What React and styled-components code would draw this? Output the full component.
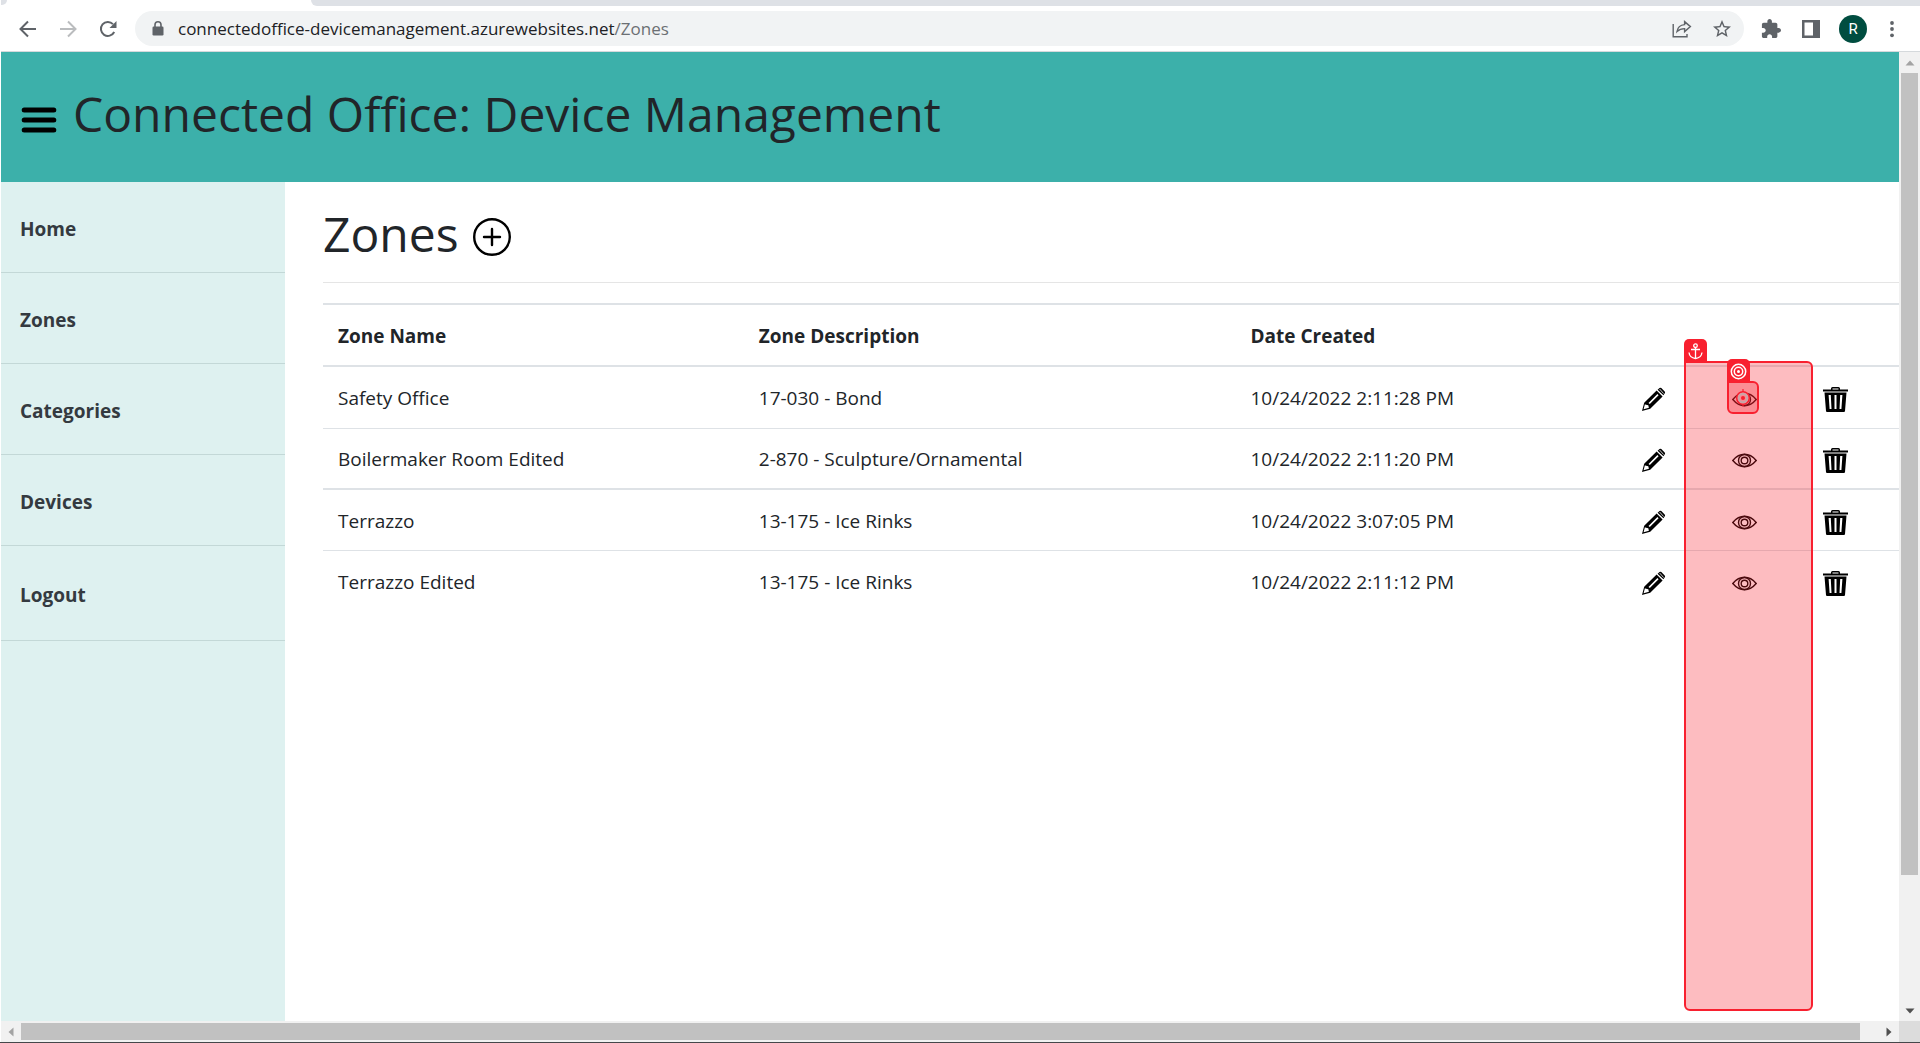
import React from "react";
import styled, { createGlobalStyle } from "styled-components";

const Global = createGlobalStyle`
  *, *::before, *::after { box-sizing: border-box; }
  html, body { margin: 0; padding: 0; }
  body {
    background: #fff;
    color: #212529;
    font-family: "Open Sans", "Noto Sans", sans-serif;
    font-size: 19px;
    line-height: 30px;
    overflow: hidden;
  }
  button { font: inherit; color: inherit; background: none; border: 0; padding: 0; margin: 0; cursor: pointer; }
  a { color: inherit; text-decoration: none; }
  svg { display: block; }
`;

const Window = styled.div`
  display: flex;
  flex-direction: column;
  height: 100vh;
  padding-left: 1px;
  border-bottom: 1px solid #45474a;
  position: relative;
`;

/* Browser chrome */
const TabStrip = styled.div`
  flex: none;
  height: 6px;
  display: flex;
  background: #dee1e6;
`;
const ActiveTab = styled.div`
  width: 308px;
  background: #fff;
  border-top-left-radius: 6px;
`;
const StripRest = styled.div`
  flex: 1;
  background: #dee1e6;
  border-bottom-left-radius: 8px;
`;
const TabCorner = styled.div`
  width: 310px;
  background: #fff;
`;
const TabCurve = styled.div`
  width: 6px;
  height: 5px;
  background: #dee1e6;
  border-bottom-right-radius: 6px;
`;
const Toolbar = styled.div`
  flex: none;
  display: flex;
  align-items: center;
  height: 46px;
  padding: 0 19px 0 15px;
  border-bottom: 1px solid #d5d9dc;
`;
const NavButtons = styled.div`
  display: flex;
  gap: 16px;
`;
const IconButton = styled.button`
  width: ${(p) => (p.$narrow ? "18px" : "24px")};
  height: 24px;
  display: grid;
  place-items: center;
  color: ${(p) => (p.$dim ? "#babcbe" : "#5f6368")};
`;
const AddressBar = styled.div`
  flex: 1;
  display: flex;
  align-items: center;
  gap: 14px;
  height: 35px;
  margin: 0 15px;
  padding: 0 10px 0 17px;
  border-radius: 18px;
  background: #f1f3f4;
`;
const Url = styled.a`
  flex: 1;
  font-size: 17px;
  line-height: 24px;
  color: #202124;
  span { color: #6b6f73; }
`;
const Tools = styled.div`
  display: flex;
  align-items: center;
  gap: 16px;
`;
const Avatar = styled.button`
  width: 28px;
  height: 28px;
  border-radius: 50%;
  background: #004d40;
  color: #fff;
  font: 15px/28px Roboto, sans-serif;
`;

/* Viewport with its scrollbars */
const Viewport = styled.div`
  flex: 1;
  min-height: 0;
  display: grid;
  grid-template-columns: minmax(0, 1fr) 21px;
  grid-template-rows: minmax(0, 1fr) 21px;
`;
const Page = styled.div`
  display: flex;
  flex-direction: column;
  overflow: hidden;
`;
const Scrollbar = styled.div`
  display: flex;
  flex-direction: ${(p) => (p.$vertical ? "column" : "row")};
  background: #f1f1f1;
  padding: ${(p) => (p.$vertical ? "0 2px" : "2px 0")};
`;
const ScrollArrow = styled.button`
  flex: none;
  width: ${(p) => (p.$vertical ? "auto" : "20px")};
  height: ${(p) => (p.$vertical ? "21px" : "auto")};
  display: grid;
  place-items: center;
  color: ${(p) => (p.$dim ? "#a3a3a3" : "#505050")};
`;
const ScrollThumb = styled.div`
  flex: ${(p) => p.$size};
  background: #c1c1c1;
`;
const ScrollGap = styled.div`
  flex: ${(p) => p.$size};
`;
const Corner = styled.div`
  background: #dcdcdc;
`;

/* Application */
const Banner = styled.header`
  flex: none;
  display: flex;
  align-items: flex-start;
  gap: 16px;
  height: 130px;
  padding: 32px 20px;
  background: #3cb0aa;
`;
const Title = styled.h1`
  margin: 0;
  font-size: 48px;
  font-weight: 500;
  line-height: 60px;
`;
const MenuButton = styled.button`
  width: 36px;
  height: 36px;
  margin-top: 18px;
`;
const Body = styled.div`
  flex: 1;
  min-height: 0;
  display: flex;
`;
const Sidebar = styled.nav`
  flex: none;
  width: 284px;
  display: flex;
  flex-direction: column;
  background: #def1f0;
`;
const SideItem = styled.a`
  display: flex;
  align-items: center;
  height: ${(p) => (p.as === "button" ? "95px" : "91px")};
  padding: 3px 19px 0;
  border-bottom: 1px solid #c3d8d7;
  color: #343a40;
  font-weight: 700;
`;
const Main = styled.main`
  flex: 1;
  min-width: 0;
  padding-left: 38px;
`;
const Heading = styled.div`
  display: flex;
  align-items: center;
  gap: 14px;
  height: 101px;
  padding-top: 4px;
  border-bottom: 1px solid #e5e5e5;
  margin-bottom: 20px;
`;
const AddButton = styled.button`
  margin-top: 6px;
`;
const Table = styled.table`
  width: 100%;
  table-layout: fixed;
  border-collapse: collapse;
  th, td {
    height: 62px;
    padding: 2px 15px 0;
    text-align: left;
    vertical-align: middle;
    border-top: 1px solid #dee2e6;
  }
  th {
    font-weight: 700;
    border-top-width: 2px;
    border-bottom: 2px solid #dee2e6;
  }
  tbody tr:nth-child(3) td { border-top-width: 2px; }
  tbody tr:nth-child(n + 2) td { height: 61px; }
`;
const Col = styled.col`
  width: ${(p) => p.$w};
`;
const ActionButton = styled.button`
  display: block;
  width: 25px;
  height: 25px;
  margin-top: 3px;
  color: #000;
`;

/* Recorder highlight shown over the page */
const Highlight = styled.div`
  position: absolute;
  top: ${(p) => p.$top}px;
  right: ${(p) => p.$right}px;
  width: ${(p) => p.$width}px;
  bottom: ${(p) => (p.$bottom === undefined ? "auto" : p.$bottom + "px")};
  height: ${(p) => (p.$height ? p.$height + "px" : "auto")};
  border: 2px solid #f8202f;
  border-radius: 0 6px 6px 6px;
  background: rgba(248, 32, 47, 0.3);
  display: grid;
  place-items: center;
`;
const HighlightTag = styled.div`
  position: absolute;
  left: -2px;
  bottom: 100%;
  width: 23px;
  height: 24px;
  display: grid;
  place-items: center;
  border-radius: 5px 5px 0 0;
  background: #f8202f;
  color: #fff;
`;

const stroke = { fill: "none", stroke: "currentColor" };

const Arrow = ({ flip }) => (
  <svg width="18" height="18" viewBox="0 0 18 18" {...stroke} strokeWidth="2">
    <path d={flip ? "M1 9H16M9 1.5L16.5 9L9 16.5" : "M17 9H2M9 1.5L1.5 9L9 16.5"} />
  </svg>
);
const Reload = () => (
  <svg width="18" height="18" viewBox="0 0 18 18">
    <path d="M15.2 12A7 7 0 1 1 14 4.1" {...stroke} strokeWidth="2" />
    <path d="M17.5 1V8H10.5Z" fill="currentColor" />
  </svg>
);
const Lock = () => (
  <svg width="12" height="15" viewBox="0 0 12 15">
    <rect x="0.5" y="5.5" width="11" height="9" rx="1.2" fill="#5f6368" />
    <path d="M3 6V3.8a3 3 0 0 1 6 0V6" fill="none" stroke="#5f6368" strokeWidth="1.6" />
  </svg>
);
const Share = () => (
  <svg width="20" height="18" viewBox="0 0 20 18" {...stroke} strokeWidth="1.4">
    <path d="M1.2 4V16.8H15V14" />
    <path d="M5 11.5C5.6 7.5 8.3 4.9 12.6 4.6V1.6L18.4 6.6L12.6 11.6V8.6C9.2 8.6 7 9.6 5 11.5Z" />
  </svg>
);
const Star = () => (
  <svg width="24" height="24" viewBox="0 0 24 24" fill="currentColor">
    <path d="M22 9.24l-7.19-.62L12 2 9.19 8.63 2 9.24l5.46 4.73L5.82 21 12 17.27 18.18 21l-1.63-7.03L22 9.24zM12 15.4l-3.76 2.27 1-4.28-3.32-2.88 4.38-.38L12 6.1l1.71 4.04 4.38.38-3.32 2.88 1 4.28L12 15.4z" transform="translate(1.2 1.2) scale(.9)" />
  </svg>
);
const Puzzle = () => (
  <svg width="20" height="20" viewBox="1 1 22 22" fill="currentColor">
    <path d="M20.5 11H19V7c0-1.1-.9-2-2-2h-4V3.5C13 2.12 11.88 1 10.5 1S8 2.12 8 3.5V5H4c-1.1 0-1.99.9-1.99 2v3.8H3.5c1.49 0 2.7 1.21 2.7 2.7s-1.21 2.7-2.7 2.7H2V20c0 1.1.9 2 2 2h3.8v-1.5c0-1.49 1.21-2.7 2.7-2.7 1.49 0 2.7 1.21 2.7 2.7V22H17c1.1 0 2-.9 2-2v-4h1.5c1.38 0 2.5-1.12 2.5-2.5S21.88 11 20.5 11z" />
  </svg>
);
const Panel = () => (
  <svg width="18" height="18" viewBox="0 0 18 18">
    <path fillRule="evenodd" fill="currentColor" d="M0 0H18V18H0ZM2.5 2.5V15.5H11V2.5Z" />
  </svg>
);
const Dots = () => (
  <svg width="4" height="18" viewBox="0 0 4 18" fill="currentColor">
    <circle cx="2" cy="3" r="1.9" /><circle cx="2" cy="9" r="1.9" /><circle cx="2" cy="15.3" r="1.9" />
  </svg>
);
const Caret = ({ turn }) => (
  <svg width="10" height="10" viewBox="0 0 10 10" fill="currentColor">
    <path d="M0.5 7.5L5 2.5L9.5 7.5Z" transform={`rotate(${turn} 5 5)`} />
  </svg>
);
const Burger = () => (
  <svg width="36" height="36" viewBox="0 0 36 36" stroke="#000" strokeWidth="5" strokeLinecap="round">
    <path d="M3.2 8H32.800M3.2 18H32.800M3.2 28H32.800" />
  </svg>
);
const PlusCircle = () => (
  <svg width="38" height="38" viewBox="0 0 38 38" fill="none" stroke="#000" strokeWidth="2.4" strokeLinecap="round">
    <circle cx="19" cy="19" r="17.8" />
    <path d="M19 11V27M11 19H27" />
  </svg>
);
const Pencil = () => (
  <svg width="25" height="25" viewBox="0 0 25 25">
    <path fillRule="evenodd" fill="currentColor" d="M1 24L3.2 15.8L15.600 3.600L21.600 9.400L9.200 21.700ZM3.900 17.200L2.600 22.300L7.900 20.800L7.300 18.300L5 17.800ZM7.500 15.900L8.800 17L17.600 8.200L16.400 7.100Z" />
    <path fill="currentColor" d="M16.600 2.700L18.500 .9Q19.400 .3 20.300 1.100L23.700 4.500Q24.500 5.400 23.800 6.300L22.400 8.300Z" />
    <path d="M18.600 2L22.700 6.600" stroke="#fff" strokeWidth=".8" />
  </svg>
);
const Eye = () => (
  <svg width="25" height="25" viewBox="0 0 25 25" fill="none" stroke="currentColor" strokeWidth="1.4">
    <path d="M.8 12.500Q6 6.300 12.500 6.300T24.200 12.500Q19 18.700 12.500 18.700T.8 12.500Z" />
    <circle cx="12.5" cy="12.5" r="6" />
    <circle cx="12.5" cy="12.5" r="3.3" />
  </svg>
);
const Trash = () => (
  <svg width="25" height="25" viewBox="0 0 25 25" fill="currentColor">
    <path fillRule="evenodd" d="M8 2.5V1.5Q8 0 9.5 0H15.5Q17 0 17 1.5V2.5H25V4.5H0V2.5ZM9.5 2.5H15.5V1.4H9.5Z" />
    <path fillRule="evenodd" d="M1.5 5.5H23.5L22 24Q21.9 25 21 25H4Q3.1 25 3 24ZM5.6 8L6.600 22H8.500L7.800 8ZM11.500 8V22H13.500V8ZM17.200 8L16.500 22H18.400L19.400 8Z" />
  </svg>
);
const Anchor = () => (
  <svg width="15" height="17" viewBox="0 0 15 17" {...stroke} strokeWidth="1.3">
    <circle cx="7.5" cy="2.7" r="1.8" />
    <path d="M7.5 4.5V15.500M3 6.500H12M1 9.500Q1.500 14.500 7.500 15.600Q13.500 14.500 14 9.500" />
  </svg>
);
const Target = () => (
  <svg width="17" height="17" viewBox="0 0 17 17" {...stroke} strokeWidth="1.5">
    <circle cx="8.5" cy="8.5" r="7.2" /><circle cx="8.5" cy="8.5" r="4.2" />
    <circle cx="8.5" cy="8.5" r="1.5" fill="currentColor" stroke="none" />
  </svg>
);
const Crosshair = () => (
  <svg width="18" height="20" viewBox="0 0 18 20" fill="none">
    <circle cx="9" cy="10" r="6.3" fill="#f98b92" stroke="#f8202f" strokeWidth="1.5" />
    <circle cx="9" cy="10" r="4.2" stroke="#c9a5a8" strokeWidth="2" />
    <path d="M9 1V4M9 16V18.5" stroke="#f8202f" strokeWidth="1.2" />
    <circle cx="9" cy="10" r="2" fill="#f8202f" />
  </svg>
);

const links = ["Home", "Zones", "Categories", "Devices"];
const zones = [
  ["Safety Office", "17-030 - Bond", "10/24/2022 2:11:28 PM"],
  ["Boilermaker Room Edited", "2-870 - Sculpture/Ornamental", "10/24/2022 2:11:20 PM"],
  ["Terrazzo", "13-175 - Ice Rinks", "10/24/2022 3:07:05 PM"],
  ["Terrazzo Edited", "13-175 - Ice Rinks", "10/24/2022 2:11:12 PM"],
];
const actions = [
  ["Edit", Pencil],
  ["Details", Eye],
  ["Delete", Trash],
];

export default function App() {
  return (
    <Window>
      <Global />
      <TabStrip>
        <TabCorner><TabCurve /></TabCorner>
        <StripRestWrap><StripRest /></StripRestWrap>
      </TabStrip>
      <Toolbar>
        <NavButtons>
          <IconButton aria-label="Back"><Arrow /></IconButton>
          <IconButton aria-label="Forward" $dim><Arrow flip /></IconButton>
          <IconButton aria-label="Reload"><Reload /></IconButton>
        </NavButtons>
        <AddressBar>
          <Lock />
          <Url href="#zones">connectedoffice-devicemanagement.azurewebsites.net<span>/Zones</span></Url>
          <Tools>
            <IconButton aria-label="Share"><Share /></IconButton>
            <IconButton aria-label="Bookmark"><Star /></IconButton>
          </Tools>
        </AddressBar>
        <Tools>
          <IconButton aria-label="Extensions"><Puzzle /></IconButton>
          <IconButton aria-label="Side panel"><Panel /></IconButton>
          <Avatar>R</Avatar>
          <IconButton aria-label="More" $narrow><Dots /></IconButton>
        </Tools>
      </Toolbar>
      <Viewport>
        <Page>
          <Banner>
            <MenuButton aria-label="Menu"><Burger /></MenuButton>
            <Title>Connected Office: Device Management</Title>
          </Banner>
          <Body>
            <Sidebar>
              {links.map((l) => <SideItem key={l} href={`#${l.toLowerCase()}`}>{l}</SideItem>)}
              <SideItem as="button">Logout</SideItem>
            </Sidebar>
            <Main>
              <Heading>
                <Title as="h2">Zones</Title>
                <AddButton aria-label="Add zone"><PlusCircle /></AddButton>
              </Heading>
              <Table>
                <colgroup>
                  <Col $w="26.7%" /><Col $w="31.2%" /><Col $w="auto" />
                  <Col $w="91px" /><Col $w="91px" /><Col $w="91px" />
                </colgroup>
                <thead>
                  <tr>
                    <th>Zone Name</th><th>Zone Description</th><th>Date Created</th>
                    <th /><th /><th />
                  </tr>
                </thead>
                <tbody>
                  {zones.map((z) => (
                    <tr key={z[0]}>
                      {z.map((t) => <td key={t}>{t}</td>)}
                      {actions.map(([name, Icon]) => (
                        <td key={name}>
                          <ActionButton aria-label={`${name} ${z[0]}`}><Icon /></ActionButton>
                        </td>
                      ))}
                    </tr>
                  ))}
                </tbody>
              </Table>
            </Main>
          </Body>
        </Page>
        <Scrollbar $vertical>
          <ScrollArrow aria-label="Scroll up" $vertical $dim><Caret turn={0} /></ScrollArrow>
          <ScrollThumb $size={802} />
          <ScrollGap $size={125} />
          <ScrollArrow aria-label="Scroll down" $vertical><Caret turn={180} /></ScrollArrow>
        </Scrollbar>
        <Scrollbar>
          <ScrollArrow aria-label="Scroll left" $dim><Caret turn={-90} /></ScrollArrow>
          <ScrollThumb $size={1839} />
          <ScrollGap $size={19} />
          <ScrollArrow aria-label="Scroll right"><Caret turn={90} /></ScrollArrow>
        </Scrollbar>
        <Corner />
      </Viewport>
      <Highlight $top={361} $right={107} $width={129} $bottom={31}>
        <HighlightTag><Anchor /></HighlightTag>
      </Highlight>
      <Highlight $top={381} $right={161} $width={32} $height={33}>
        <HighlightTag><Target /></HighlightTag>
        <Crosshair />
      </Highlight>
    </Window>
  );
}

const StripRestWrap = styled.div`
  flex: 1;
  display: flex;
  background: #fff;
`;
